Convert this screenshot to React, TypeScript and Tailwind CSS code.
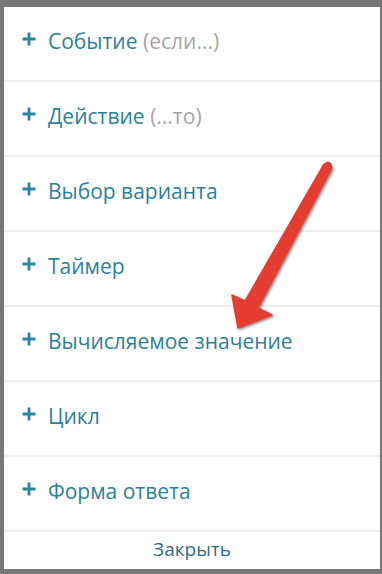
import { Fragment } from "react";

type Item = { label: string; hint?: string };

const items: Item[] = [
  { label: "Событие", hint: "(если...)" },
  { label: "Действие", hint: "(...то)" },
  { label: "Выбор варианта" },
  { label: "Таймер" },
  { label: "Вычисляемое значение" },
  { label: "Цикл" },
  { label: "Форма ответа" },
];

function PlusIcon() {
  return (
    <svg width="14" height="14" viewBox="0 0 14 14" className="shrink-0 -translate-y-[2px]">
      <path d="M7 0.5v13M0.5 7h13" stroke="#2d86a0" strokeWidth="2.8" fill="none" />
    </svg>
  );
}

function Arrow() {
  return (
    <svg
      width="382"
      height="574"
      viewBox="0 0 382 574"
      className="pointer-events-none absolute left-0 top-0"
    >
      <defs>
        <filter id="arrow-shadow" x="-20%" y="-20%" width="140%" height="140%">
          <feDropShadow dx="1.5" dy="1.5" stdDeviation="0.8" floodColor="#4a4a4a" floodOpacity="0.6" />
        </filter>
      </defs>
      <polygon
        points="324,164 245,301 232,295 238,328 272,315 258,308 332,168"
        fill="#e63c30"
        stroke="#e63c30"
        strokeWidth="1.5"
        strokeLinejoin="round"
        filter="url(#arrow-shadow)"
      />
      <circle cx="328" cy="166" r="4.2" fill="#e63c30" />
    </svg>
  );
}

export default function App() {
  return (
    <div
      className="relative h-[574px] w-[382px] overflow-hidden bg-[#777777] pb-[5px] pl-[4px] pr-[2px] pt-[7px]"
      style={{ fontFamily: '"Open Sans", "Noto Sans", sans-serif' }}
    >
      <div className="flex h-full flex-col bg-white">
        {items.map((item) => (
          <Fragment key={item.label}>
            <button
              type="button"
              className="flex h-[75px] shrink-0 items-center gap-[12px] border-b-2 border-[#eeeeee] pb-[5px] pl-[18px] text-left text-[21px] leading-none text-[#2a8299]"
            >
              <PlusIcon />
              <span>
                {item.label}
                {item.hint ? <span className="text-[#a6a6a6]"> {item.hint}</span> : null}
              </span>
            </button>
          </Fragment>
        ))}
        <button
          type="button"
          className="flex flex-1 items-center justify-center pb-[3px] text-[19px] leading-none text-[#2c6f82]"
        >
          Закрыть
        </button>
      </div>
      <Arrow />
    </div>
  );
}
